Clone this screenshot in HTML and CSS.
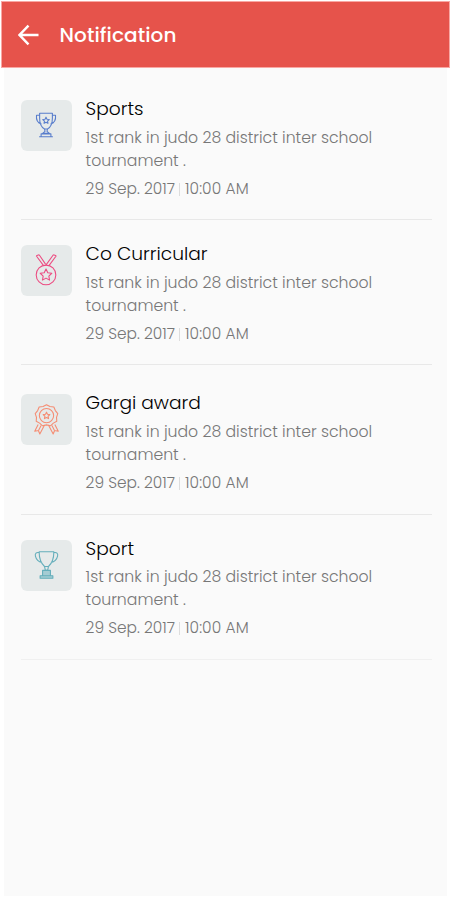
FILE: index.html
```html
<!DOCTYPE html>
<html lang="en">
<head>
    <meta charset="UTF-8">
    <meta name="viewport" content="width=device-width, initial-scale=1.0">
    <title>Notification</title>
    <link rel="stylesheet" href="styles.css">
</head>
<body>
    <div class="screen">
        <header class="header">
            <svg class="back" viewBox="0 0 22 22">
                <path d="M20.5 11H2M10.5 1.7L1.5 11l9 9.3"/>
            </svg>
            <h1>Notification</h1>
        </header>

        <main class="list">
            <article class="item">
                <div class="icon blue">
                    <svg viewBox="0 0 52 52">
                        <path d="M19 13.500h13v5c0 5.500-2.300 9.500-5 11h-3c-2.700-1.500-5-5.500-5-11zM19 15.500h-3.200c-.5 4.500 1.500 8 5.200 9M32 15.500h3.200c.5 4.500-1.500 8-5.200 9M24 29.500l.5 2.500-2.500 2h7l-2.500-2 .5-2.500M20.500 34.500h10v3h-10zM18.500 37.500h14"/>
                        <path d="M25.500 17.500l1 2.100 2.300.3-1.700 1.600.4 2.300-2-1.100-2 1.100.4-2.300-1.700-1.600 2.300-.3z"/>
                    </svg>
                </div>
                <div class="details">
                    <h2>Sports</h2>
                    <p class="text">1st rank in judo 28 district inter school tournament .</p>
                    <p class="time"><span class="date">29 Sep. 2017</span><span class="sep"></span><span class="hour">10:00 AM</span></p>
                </div>
            </article>

            <article class="item">
                <div class="icon pink">
                    <svg viewBox="0 0 52 52">
                        <path d="M15.500 11l7.500 10M18.500 10l6.500 9.500M15.500 11l3-1M36 11l-7.500 10M33 10l-8 11M36 11l-3-1"/>
                        <circle cx="25.500" cy="30.500" r="10"/>
                        <path d="M25.500 24.500l1.800 3.800 4.100.5-3 2.900.7 4.100-3.600-2-3.600 2 .7-4.100-3-2.900 4.100-.5z"/>
                    </svg>
                </div>
                <div class="details">
                    <h2>Co Curricular</h2>
                    <p class="text">1st rank in judo 28 district inter school tournament .</p>
                    <p class="time"><span class="date">29 Sep. 2017</span><span class="sep"></span><span class="hour">10:00 AM</span></p>
                </div>
            </article>

            <article class="item spaced">
                <div class="icon orange">
                    <svg viewBox="0 -1 52 52">
                        <path d="M26 10l3.500 1.800 4 .4 1.500 3.700 2.500 3.100-1.300 3.800.3 4-3.500 1.900-2.900 2.700-4.100-.9-4.100.9-2.900-2.700-3.500-1.900.3-4-1.300-3.800 2.500-3.100 1.500-3.700 4-.4z"/>
                        <circle cx="26" cy="21" r="7.300"/>
                        <path d="M26 17.500l1 2.200 2.400.3-1.800 1.700.5 2.400-2.100-1.200-2.100 1.200.5-2.400-1.800-1.700 2.400-.3z"/>
                        <path d="M17.500 30l-3.500 7 3.700-.8 1.500 3.600L24 30.500M34.500 30l3.500 7-3.700-.8-1.500 3.600L28 30.500M20.500 31l-2.500 5M31.500 31l2.500 5"/>
                    </svg>
                </div>
                <div class="details">
                    <h2>Gargi award</h2>
                    <p class="text">1st rank in judo 28 district inter school tournament .</p>
                    <p class="time"><span class="date">29 Sep. 2017</span><span class="sep"></span><span class="hour">10:00 AM</span></p>
                </div>
            </article>

            <article class="item last">
                <div class="icon teal">
                    <svg viewBox="0 0 52 52">
                        <path d="M18.500 12h15c0 7-2 12-5.500 15h-4c-3.500-3-5.500-8-5.500-15zM18.700 13c-3-.8-4.700.5-4 3.500.8 3.500 3 5.700 6.800 6.500M33.300 13c3-.8 4.700.5 4 3.500-.8 3.500-3 5.700-6.800 6.500M24 27h4l-.8 4h-2.400z"/>
                        <path class="base" d="M22 31h8v5.500h-8zM19.500 36.500h13v2.500h-13z"/>
                    </svg>
                </div>
                <div class="details">
                    <h2>Sport</h2>
                    <p class="text">1st rank in judo 28 district inter school tournament .</p>
                    <p class="time"><span class="date">29 Sep. 2017</span><span class="sep"></span><span class="hour">10:00 AM</span></p>
                </div>
            </article>
        </main>
    </div>
</body>
</html>
```

FILE: styles.css
```css
* {
    margin: 0;
    padding: 0;
    box-sizing: border-box;
}

body {
    font-family: Poppins, Inter, "Open Sans", sans-serif;
    background: #fff;
    height: 900px;
    padding: 2px 1px 4px 2px;
}

.screen {
    height: 894px;
    background: #fafafa;
    border: solid #fff;
    border-width: 0 2px;
}

.header {
    display: flex;
    align-items: center;
    height: 65px;
    margin: 0 -2px;
    padding-left: 16px;
    background: #e6534b;
    box-shadow: 0 0 0 1px #f9a7a3;
    color: #fff;
}

.back {
    width: 22px;
    height: 22px;
    margin-right: 19.500px;
    fill: none;
    stroke: #fff;
    stroke-width: 2.4;
}

.header h1 {
    font-size: 20px;
    font-weight: 500;
    letter-spacing: 0.1px;
}

.list {
    padding: 8px 15px 0 17px;
}

.item {
    display: flex;
    height: 145px;
    padding-top: 25px;
    border-bottom: 1px solid #e8e8e8;
}

.item.spaced {
    height: 150px;
    padding-top: 29px;
}

.item.last {
    border-color: #f0f0f0;
}

.item.last .text {
    margin-top: 6px;
}

.icon {
    width: 51px;
    height: 51px;
    margin-right: 13.6px;
    border-radius: 6px;
    background: #e6eaea;
}

.icon svg {
    display: block;
    width: 51px;
    height: 51px;
    fill: none;
    stroke: currentColor;
    stroke-width: 1.1;
    stroke-linejoin: round;
}

.blue { color: #587dcc; }
.pink { color: #ec4c82; }
.orange { color: #f58d73; }
.teal { color: #64aebb; }

.base {
    fill: #64aebb;
    fill-opacity: 0.5;
}

.details {
    width: 300px;
}

.details h2 {
    font-size: 18.6px;
    font-weight: 300;
    line-height: 22px;
    margin-top: -2px;
    color: #000;
}

.text,
.time {
    font-weight: 300;
    color: #777;
}

.text {
    font-size: 15.7px;
    line-height: 22.5px;
    margin-top: 7px;
}

.time {
    display: flex;
    align-items: center;
    font-size: 15.4px;
    line-height: 22px;
    margin-top: 6px;
}

.sep {
    width: 1px;
    height: 13px;
    margin: 0 5px 0 4px;
    background: #ddd;
}

.hour {
    letter-spacing: 0.1px;
}
```
